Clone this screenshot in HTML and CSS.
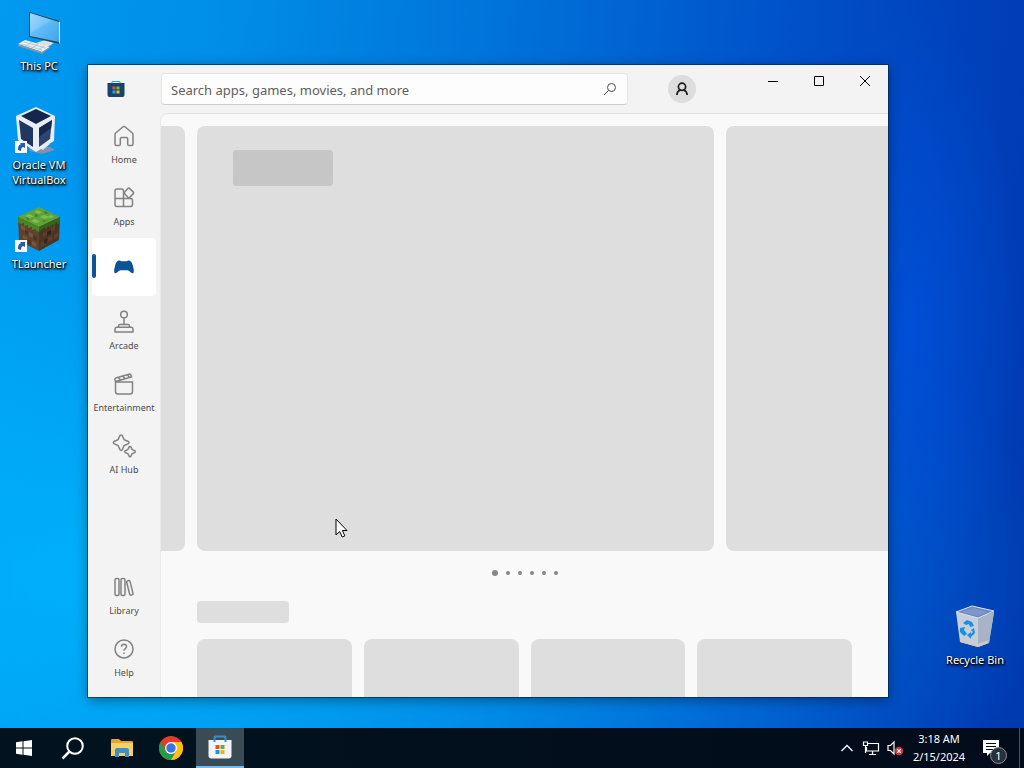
FILE: index.html
```
<!DOCTYPE html>
<html lang="en">

<head>
	<meta charset="UTF-8">
	<meta name="viewport" content="width=device-width, initial-scale=1.0">
	<title>Desktop</title>
	<link rel="stylesheet" href="styles.css">
</head>

<body>
	<main class="desktop">
		<div class="shortcuts">
			<button class="shortcut">
				<svg width="48" height="48" viewBox="0 0 48 48">
					<defs>
						<linearGradient id="screen" x1="0" y1="0" x2="1" y2="1">
							<stop offset="0" stop-color="#8fd4fb"/>
							<stop offset="0.5" stop-color="#5bb9f5"/>
							<stop offset="1" stop-color="#3fa4ee"/>
						</linearGradient>
					</defs>
					<path d="M29 33l7 2v4l-8-2z" fill="#9aa9b4"/>
					<path d="M21 36l9-3 9 3-7 4z" fill="#d9e1e6"/>
					<path d="M14 5l31 9v23L14 30z" fill="#23475f"/>
					<path d="M15 6l29 9v20L15 29z" fill="url(#screen)"/>
					<path d="M15 6l22 7-22 13z" fill="#fff" opacity=".15"/>
					<path d="M44 14l1 1v22l-1-1z" fill="#d5e6ef"/>
					<path d="M3 37l7-4 25 7-8 5z" fill="#e8edf0"/>
					<path d="M3 37l24 8 8-5v1l-8 6L3 39z" fill="#8198a6"/>
					<path d="M6 37l21 6M9 35l22 6M11 39l6-4M17 41l6-4M23 43l6-4" stroke="#a9bac4" stroke-width=".7" fill="none"/>
				</svg>
				<span>This PC</span>
			</button>
			<button class="shortcut">
				<svg width="48" height="48" viewBox="0 0 48 48">
					<path d="M14 41h21l5 3-13 4-12-3z" fill="#8192ae"/>
					<path d="M15 38h20l-7 6z" fill="#d9e2ef"/>
					<path d="M21 1l19 9-1 25-18 11L3 34 1 10z" fill="#e9eef6"/>
					<path d="M21 3l15 7-15 8-15-8z" fill="#14264c"/>
					<path d="M4 14l14 8v19L6 33z" fill="#21375f"/>
					<path d="M24 22l13-8-2 19-11 8z" fill="#2d4571"/>
					<path d="M24 22l13-8-1 8-12 9z" fill="#16294f"/>
					<rect y="35" width="12" height="12" fill="#f7f9fb"/>
					<path d="M3 44c0-4 1-5 3-6l-1-1h5v5l-2-1c-2 1-2 2-2 4z" fill="#285aa6"/>
				</svg>
				<span>Oracle VM VirtualBox</span>
			</button>
			<button class="shortcut">
				<svg width="48" height="48" viewBox="0 0 48 48">
					<path d="M3 12l21 9v25L4 36z" fill="#5f422e"/>
					<path d="M24 21l21-9-1 23-20 11z" fill="#4c3425"/>
					<path d="M24 2l21 10-21 10L3 12z" fill="#5fa338"/>
					<path d="M3 12l21 10v5l-3-1v-2l-4 1v-3l-4 1v-3l-4 1v-3l-3 1-3-2z" fill="#49842a"/>
					<path d="M24 22l21-10v6l-3 1v-2l-4 4v-2l-4 4v-2l-4 3v-2l-6 5z" fill="#35651d"/>
					<path d="M22 5l5 2-3 2-5-2zM14 9l5 2-4 2-5-2zM29 10l6 2-5 2-5-2zM20 14l5 2-4 2-5-2zM36 10l3 2-3 1-3-1z" fill="#7fbe52"/>
					<path d="M20 9l4 2-4 1zM29 6l5 2-4 1zM11 12l4 2-3 1zM28 15l4 1-4 1z" fill="#437c27"/>
					<path d="M6 20l4 2v4l-4-2zM14 27l4 2v4l-4-2zM17 36l4 2v4l-4-2zM8 30l4 2v3l-4-2z" fill="#7b563c"/>
					<path d="M10 25l3 1v4l-3-1zM18 30l4 2v4l-4-2zM13 35l3 1v4l-3-1z" fill="#4f3222"/>
					<path d="M28 28l4-2v4l-4 2zM36 22l4-2v5l-4 2zM33 33l4-2v4l-4 2zM39 30l4-2v4l-4 2zM26 38l4-2v4l-4 2z" fill="#5d3f2b"/>
					<path d="M32 27l4-2v4l-4 2zM29 35l3-2v4l-3 2z" fill="#35231a"/>
					<rect y="35" width="12" height="12" fill="#f7f9fb"/>
					<path d="M3 44c0-4 1-5 3-6l-1-1h5v5l-2-1c-2 1-2 2-2 4z" fill="#285aa6"/>
				</svg>
				<span>TLauncher</span>
			</button>
		</div>

		<button class="shortcut recycle-bin">
			<svg width="48" height="48" viewBox="0 0 48 48">
				<path d="M5 11l4 30 18 5 11-4 5-31-16 6z" fill="#c7ced9"/>
				<path d="M27 17l16-6-5 31-11 4z" fill="#a8b3c5"/>
				<path d="M5 11l16-6 22 5-16 7z" fill="#6a86c0"/>
				<path d="M10 11l12-4 15 4-10 4z" fill="#8196c4"/>
				<path d="M5 11l16-6 22 5-16 7z" fill="none" stroke="#e0e8f5"/>
				<path d="M9 38l18 5 11-4-1 3-10 4-18-5z" fill="#cfcac9"/>
				<path d="M12 22l4-3 5 2 2 4-4 1-1-3-3 1zM9 27l5-1-1 3 3 4-3 2-4-4zM23 27l1 5-4 4v2l-4-4 4-3v2l2-2-2-2z" fill="#1b8fe0"/>
			</svg>
			<span>Recycle Bin</span>
		</button>

		<section class="window" aria-label="Store">
			<header class="titlebar">
				<svg class="app-logo" width="18" height="18" viewBox="0 0 18 18">
					<path d="M5 3.500V1.500h8v2" fill="none" stroke="#26a6e3"/>
					<path d="M.5 3h17v12q0 2-2 2h-13q-2 0-2-2z" fill="#17436f"/>
					<path d="M5.500 6.500h3v3h-3z" fill="#e5562c"/>
					<path d="M9.500 6.500h3v3h-3z" fill="#84b92d"/>
					<path d="M5.500 10.500h3v3h-3z" fill="#2ba2e3"/>
					<path d="M9.500 10.500h3v3h-3z" fill="#f4b91e"/>
				</svg>
				<form class="search">
					<input type="text" aria-label="Search" placeholder="Search apps, games, movies, and more">
					<button type="button" aria-label="Search">
						<svg width="14" height="14" viewBox="0 0 14 14" fill="none" stroke="#4a4a4a">
							<circle cx="8.500" cy="5.500" r="4"/>
							<path d="M5.500 8.500L1 13"/>
						</svg>
					</button>
				</form>
				<button class="account" aria-label="Account">
					<svg width="14" height="14" viewBox="0 0 14 14" fill="none" stroke="#1c1c1c" stroke-width="1.700">
						<circle cx="7" cy="4.800" r="3.600"/>
						<path d="M1.800 13c.2-2.500 1.300-4.200 3.500-5M12.200 13c-.2-2.500-1.300-4.200-3.500-5"/>
					</svg>
				</button>
				<div class="window-buttons">
					<button aria-label="Minimize">
						<svg width="12" height="12" viewBox="0 0 12 12" stroke="#000"><path d="M1 6.500h10"/></svg>
					</button>
					<button aria-label="Maximize">
						<svg width="12" height="12" viewBox="0 0 12 12" stroke="#000" fill="none"><path d="M1.500 1.500h9v9h-9z"/></svg>
					</button>
					<button aria-label="Close">
						<svg width="12" height="12" viewBox="0 0 12 12" stroke="#000"><path d="M1 1l10 10M11 1L1 11"/></svg>
					</button>
				</div>
			</header>

			<div class="window-body">
				<nav class="sidebar">
					<button class="nav-item">
						<svg width="24" height="24" viewBox="0 0 24 24">
							<path d="M3 10.500Q3 9.700 3.700 9l7-6q1.300-1 2.600 0l7 6q.7.700.7 1.500V20q0 1.500-1.500 1.500H17q-1.300 0-1.300-1.300V15q0-1.500-1.500-1.500H9.800q-1.500 0-1.500 1.500v5.200q0 1.300-1.300 1.300H4.500Q3 21.500 3 20z"/>
						</svg>
						<span>Home</span>
					</button>
					<button class="nav-item">
						<svg width="24" height="24" viewBox="0 0 24 24">
							<path d="M11.500 12.500V5q0-2-2-2H5Q3 3 3 5v13.500q0 2 2 2h13.500q2 0 2-2v-4q0-2-2-2H3M11.500 12.500v8"/>
							<path d="M12.500 6.200l3.300-3.600q1-1 2 0l3.300 3.300q1 1 0 2l-3.300 3.300q-1 1-2 0l-3.300-3.600q-.7-.7 0-1.400z"/>
						</svg>
						<span>Apps</span>
					</button>
					<button class="nav-item selected" aria-label="Gaming">
						<svg width="24" height="24" viewBox="0 0 24 24">
							<path d="M7 5.500c1.500-.5 2 .7 3 .7h4c1 0 1.500-1.200 3-.7 2 .6 3 1.500 4 5.500.8 3 1.300 6.500 0 7.200-2 .7-3.500-3-5.500-3h-7c-2 0-3.500 3.700-5.500 3-1.300-.7-.8-4.200 0-7.200 1-4 2-4.900 4-5.500z"/>
						</svg>
					</button>
					<button class="nav-item">
						<svg width="24" height="24" viewBox="0 0 24 24">
							<circle cx="12" cy="4.500" r="3.300"/>
							<path d="M12 8v6.500M6.500 17v-1q0-1.500 1.500-1.500h8q1.500 0 1.500 1.500v1M5 17.200h14q2 0 2 2v2.800H3v-2.800q0-2 2-2z"/>
						</svg>
						<span>Arcade</span>
					</button>
					<button class="nav-item">
						<svg width="24" height="24" viewBox="0 0 24 24">
							<path d="M3.500 10h17v9.500q0 2.500-2.500 2.500H6q-2.500 0-2.500-2.500zM3.500 9.500L3 8q-.4-1.800 1.400-2.300l12.700-3.500q1.500-.4 2 1.100l.4 1.700zM6.500 5.500l2 2.500M11 4.200l2 2.500M15.500 3l2 2.500"/>
						</svg>
						<span>Entertainment</span>
					</button>
					<button class="nav-item">
						<svg width="24" height="24" viewBox="0 0 24 24">
							<path d="M8 1.500q1.200-1.200 2.200 0l1.900 4.100 4.300 1.900q1.200 1 0 2.100l-4.300 1.900-1.900 4.300q-1 1.200-2.200 0l-1.900-4.300-4.200-1.900q-1.200-1 0-2.100l4.200-1.900z"/>
							<path d="M17.200 12.800q.8-.8 1.600 0l1.300 2.700 2.800 1.300q.8.800 0 1.600l-2.800 1.300-1.300 2.700q-.8.800-1.600 0l-1.300-2.700-2.700-1.300q-.8-.8 0-1.600l2.700-1.300z"/>
						</svg>
						<span>AI Hub</span>
					</button>
					<button class="nav-item nav-library">
						<svg width="24" height="24" viewBox="0 0 24 24">
							<rect x="3" y="3.500" width="4" height="17" rx="1.500"/>
							<rect x="9" y="3.500" width="4" height="17" rx="1.500"/>
							<path d="M14.700 7.300q-.2-1 .8-1.300l1.200-.4q1-.2 1.300.8l3 12q.2 1-.8 1.300l-1.200.4q-1 .2-1.300-.8z"/>
						</svg>
						<span>Library</span>
					</button>
					<button class="nav-item">
						<svg width="24" height="24" viewBox="0 0 24 24">
							<circle cx="12" cy="12" r="9"/>
							<path d="M9.500 9.800q0-2.500 2.500-2.500t2.500 2.300c0 2-2.500 2-2.500 4.200M12 15.500v1.500"/>
						</svg>
						<span>Help</span>
					</button>
				</nav>

				<div class="content">
					<div class="carousel">
						<div class="slide slide-prev"></div>
						<div class="slide slide-current">
							<div class="slide-title"></div>
						</div>
						<div class="slide slide-next"></div>
					</div>
					<div class="dots">
						<button class="dot active" aria-label="Slide 1"></button>
						<button class="dot" aria-label="Slide 2"></button>
						<button class="dot" aria-label="Slide 3"></button>
						<button class="dot" aria-label="Slide 4"></button>
						<button class="dot" aria-label="Slide 5"></button>
						<button class="dot" aria-label="Slide 6"></button>
					</div>
					<div class="section-title"></div>
					<div class="cards">
						<div class="card"></div>
						<div class="card"></div>
						<div class="card"></div>
						<div class="card"></div>
					</div>
				</div>
			</div>
		</section>

		<svg class="cursor" width="14" height="21" viewBox="0 0 14 21">
			<path d="M1 1v16l3.700-3.500L7.200 19l2.600-1.100L7.400 12.500H12z" fill="#fff" stroke="#000"/>
		</svg>
	</main>

	<footer class="taskbar">
		<div class="taskbar-apps">
			<button aria-label="Start">
				<svg width="16" height="16" viewBox="0 0 16 16" fill="#fff">
					<path d="M0 2.200L6.500 1.300v6.200H0zM7.500 1.200L16 0v7.500H7.500zM0 8.500h6.500v6.200L0 13.800zM7.500 8.500H16V16l-8.500-1.200z"/>
				</svg>
			</button>
			<button aria-label="Search">
				<svg width="24" height="24" viewBox="0 0 24 24" fill="none" stroke="#fff" stroke-width="2">
					<circle cx="14" cy="10" r="7.800"/>
					<path d="M8.500 15.500L1.500 22.500" stroke-width="2.500"/>
				</svg>
			</button>
			<button aria-label="File Explorer">
				<svg width="24" height="24" viewBox="0 0 24 24">
					<path d="M1 4q0-1 1-1h7l2 2h11q1 0 1 1v14H1z" fill="#e4a52e"/>
					<path d="M1 7h22v13H1z" fill="#f8cf68"/>
					<path d="M5 21v-7q0-2 2-2h10q2 0 2 2v7h-4v-4H9v4z" fill="#3c92c6"/>
				</svg>
			</button>
			<button aria-label="Chrome">
				<svg width="24" height="24" viewBox="0 0 24 24">
					<circle cx="12" cy="12" r="12" fill="#e33b2e"/>
					<path d="M1.600 6A12 12 0 0 0 12 24l5.200-9H6.800z" fill="#259b4a"/>
					<path d="M12 24A12 12 0 0 0 22.400 6H12l5.200 9z" fill="#fbc116"/>
					<circle cx="12" cy="12" r="6" fill="#fff"/>
					<circle cx="12" cy="12" r="4.700" fill="#3576e0"/>
				</svg>
			</button>
			<button class="running" aria-label="Microsoft Store">
				<svg width="24" height="24" viewBox="0 0 24 24">
					<path d="M.5 5h23v15.500q0 3-3 3h-17q-3 0-3-3z" fill="#f2f5f7"/>
					<path d="M6.500 7V2.500q0-1 1-1h9q1 0 1 1V7" fill="none" stroke="#398dcc" stroke-width="2"/>
					<path d="M7.500 10h4v4h-4z" fill="#e1542a"/>
					<path d="M12.500 10h4v4h-4z" fill="#72a928"/>
					<path d="M7.500 15h4v4h-4z" fill="#2a93d3"/>
					<path d="M12.500 15h4v4h-4z" fill="#f2b01d"/>
				</svg>
			</button>
		</div>
		<div class="tray">
			<button aria-label="Show hidden icons">
				<svg width="14" height="14" viewBox="0 0 14 14" fill="none" stroke="#fff" stroke-width="1.300"><path d="M1.500 10L7 4.500l5.500 5.500"/></svg>
			</button>
			<button aria-label="Network">
				<svg width="18" height="16" viewBox="0 0 18 16" fill="none" stroke="#fff" stroke-width="1.200">
					<path d="M6 3.500h10.500v7.500h-12V7M10.500 11v3.500M7 14.500h7M1.500 2h4v3.500h-4zM3.500 5.500V13"/>
				</svg>
			</button>
			<button aria-label="Volume, muted">
				<svg width="18" height="16" viewBox="0 0 18 16" fill="none" stroke="#fff">
					<path d="M2 5.500h2.500L8 2v12l-3.500-3.500H2z" stroke-width="1.200"/>
					<circle cx="13" cy="11" r="4.200" fill="#d13438" stroke="none"/>
					<path d="M11.200 9.200l3.600 3.600M14.800 9.200l-3.600 3.600" stroke-width="1.200"/>
				</svg>
			</button>
			<button class="clock">
				<span>3:18 AM</span>
				<span>2/15/2024</span>
			</button>
			<button class="notifications" aria-label="Notifications">
				<svg width="18" height="18" viewBox="0 0 18 18">
					<path d="M1 1h16v13H8l-3 3v-3H1z" fill="#fff"/>
					<path d="M4 4.500h10M4 7.500h10M4 10.500h7" stroke="#020c18"/>
				</svg>
				<span class="badge">1</span>
			</button>
			<button class="show-desktop" aria-label="Show desktop"></button>
		</div>
	</footer>
</body>

</html>
```
FILE: styles.css
```
*
{
	box-sizing: border-box;
}

body
{
	margin: 0;
	height: 100vh;
	display: flex;
	flex-direction: column;
	overflow: hidden;
	font-family: 'Noto Sans', 'Open Sans', sans-serif;
	font-size: 11px;
	color: #ffffff;
	background:
		radial-gradient(ellipse 110px 320px at 89% 43%, rgba(0, 84, 224, 0.7), rgba(0, 84, 224, 0)),
		radial-gradient(ellipse 900px 420px at 15% 75%, rgba(0, 184, 255, 0.8), rgba(0, 184, 255, 0)),
		linear-gradient(95deg, #009af0 0%, #008ee8 20%, #0074da 45%, #0052ca 72%, #0042bc 88%, #0039b0 100%);
}

button
{
	padding: 0;
	border: none;
	background: none;
	font: inherit;
	color: inherit;
}

svg
{
	display: block;
	flex-shrink: 0;
}

.desktop
{
	position: relative;
	flex: 1;
	min-height: 0;
}

/* desktop icons */
.shortcuts
{
	display: grid;
	grid-auto-rows: 99px;
	width: 78px;
	padding-top: 7px;
}

.shortcut
{
	display: flex;
	flex-direction: column;
	align-items: center;
	gap: 3px;
	width: 78px;
	line-height: 15px;
	text-align: center;
	text-shadow: 1px 1px 2px #000000, 0 1px 2px #000000, 1px 2px 3px rgba(0, 0, 0, 0.7);
}

.recycle-bin
{
	position: absolute;
	right: 10px;
	bottom: 61px;
}

/* store window */
.window
{
	position: absolute;
	top: 65px;
	right: 136px;
	bottom: 31px;
	left: 88px;
	display: flex;
	flex-direction: column;
	background-color: #f3f3f3;
	color: #4c4c4c;
	box-shadow: 0 0 0 1px rgba(0, 40, 80, 0.7), 0 3px 12px rgba(0, 0, 0, 0.4);
}

.titlebar
{
	display: flex;
	align-items: center;
	height: 48px;
	flex-shrink: 0;
	padding-left: 19px;
}

.search
{
	display: flex;
	flex: 0 1 467px;
	align-items: center;
	height: 32px;
	margin: 0 40px 0 36px;
	padding-right: 10px;
	border: 1px solid #e5e5e5;
	border-bottom-color: #cccccc;
	border-radius: 4px;
	background-color: #fdfdfd;
}

.search input
{
	flex: 1;
	min-width: 0;
	padding: 2px 9px 0;
	border: none;
	outline: none;
	background: none;
	font: inherit;
	font-size: 13px;
}

.search input::placeholder
{
	color: #5f5f5f;
	opacity: 1;
}

.account
{
	display: flex;
	align-items: center;
	justify-content: center;
	width: 28px;
	height: 28px;
	border-radius: 50%;
	background-color: #dddddd;
}

.window-buttons
{
	display: flex;
	align-self: flex-start;
	margin-left: auto;
}

.window-buttons button
{
	display: flex;
	align-items: center;
	justify-content: center;
	width: 46px;
	height: 32px;
}

.window-body
{
	display: flex;
	flex: 1;
	min-height: 0;
}

.sidebar
{
	display: flex;
	flex-direction: column;
	gap: 4px;
	width: 72px;
	padding: 1px 4px 12px;
}

.nav-item
{
	display: flex;
	flex-direction: column;
	align-items: center;
	gap: 6px;
	height: 58px;
	padding-top: 10px;
	border-radius: 4px;
	font-size: 9px;
	line-height: 12px;
}

.nav-item svg
{
	fill: none;
	stroke: #828282;
	stroke-width: 1.5;
}

.nav-item.selected
{
	position: relative;
	justify-content: center;
	padding-top: 0;
	background-color: #ffffff;
}

.nav-item.selected::before
{
	position: absolute;
	content: "";
	top: 16px;
	left: 0;
	width: 4px;
	height: 24px;
	border-radius: 2px;
	background-color: #0b5394;
}

.nav-item.selected svg
{
	fill: #0b5394;
	stroke: none;
}

.nav-library
{
	margin-top: auto;
}

.content
{
	display: flex;
	flex: 1;
	flex-direction: column;
	min-width: 0;
	overflow: hidden;
	padding-top: 12px;
	border-top: 1px solid #e3e3e3;
	border-left: 1px solid #e9e9e9;
	border-top-left-radius: 8px;
	background-color: #f9f9f9;
}

.carousel
{
	display: grid;
	grid-template-columns: 24px 1fr 162px;
	gap: 12px;
	flex-shrink: 0;
}

.slide
{
	border-radius: 8px;
	background-color: #dedede;
}

.slide-prev
{
	border-top-left-radius: 0;
	border-bottom-left-radius: 0;
}

.slide-current
{
	min-height: 425px;
	padding: 24px 36px;
}

.slide-next
{
	border-top-right-radius: 0;
	border-bottom-right-radius: 0;
}

.slide-title
{
	width: 100px;
	height: 36px;
	border-radius: 4px;
	background-color: #c6c6c6;
}

.dots
{
	display: flex;
	align-items: center;
	justify-content: center;
	gap: 8px;
	height: 44px;
	flex-shrink: 0;
}

.dot
{
	width: 4px;
	height: 4px;
	border-radius: 50%;
	background-color: #868686;
}

.dot.active
{
	width: 6px;
	height: 6px;
}

.section-title
{
	width: 92px;
	height: 22px;
	flex-shrink: 0;
	margin: 6px 36px 16px;
	border-radius: 4px;
	background-color: #dedede;
}

.cards
{
	display: grid;
	grid-template-columns: repeat(4, 1fr);
	gap: 12px;
	flex: 1;
	padding: 0 36px;
}

.card
{
	border-radius: 8px 8px 0 0;
	background-color: #dedede;
}

.cursor
{
	position: absolute;
	top: 518px;
	left: 335px;
}

/* taskbar */
.taskbar
{
	display: flex;
	justify-content: space-between;
	height: 40px;
	flex-shrink: 0;
	background: linear-gradient(90deg, #02131f, #020b1a);
}

.taskbar button
{
	display: flex;
	align-items: center;
	justify-content: center;
}

.taskbar-apps
{
	display: flex;
	gap: 1px;
}

.taskbar-apps button
{
	width: 48px;
}

.taskbar-apps .running
{
	border-bottom: 2px solid #76b9ed;
	background-color: #3a4b56;
}

.tray
{
	display: flex;
}

.tray button
{
	width: 24px;
}

.tray .clock
{
	flex-direction: column;
	width: 64px;
	line-height: 18px;
}

.tray .notifications
{
	position: relative;
	width: 48px;
	padding-right: 8px;
}

.badge
{
	position: absolute;
	right: 12px;
	bottom: 4px;
	width: 17px;
	height: 17px;
	border: 1px solid #8b8f96;
	border-radius: 50%;
	background-color: #2b313c;
	line-height: 15px;
}

.tray .show-desktop
{
	width: 5px;
	border-left: 1px solid #4a525e;
}
```
